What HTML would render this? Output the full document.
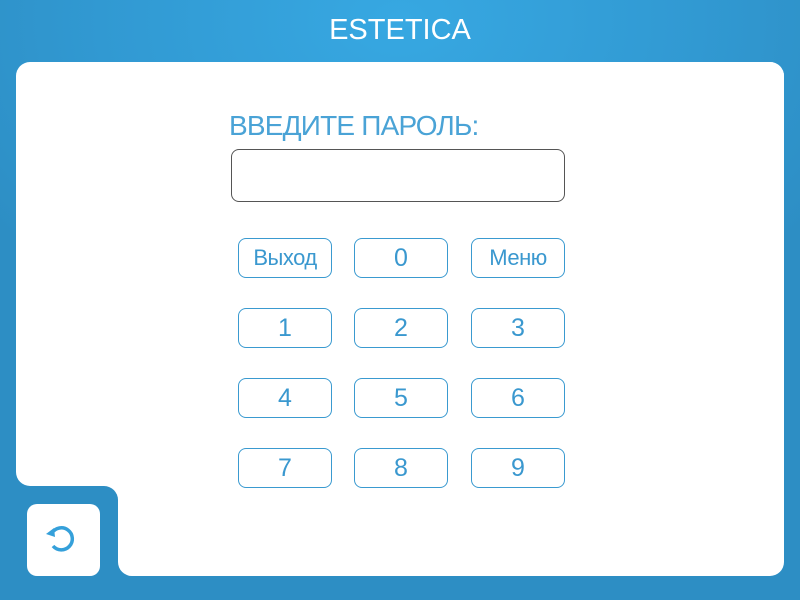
<!DOCTYPE html>
<html><head><meta charset="utf-8"><style>
*{margin:0;padding:0;box-sizing:border-box}
body{width:800px;height:600px;overflow:hidden;position:relative;font-family:"Liberation Sans","DejaVu Sans",sans-serif;
background:radial-gradient(ellipse 500px 350px at 400px 20px,#37a8e2 0%,#3199d2 60%,#2d8ec4 100%);}
.title{position:absolute;top:14px;left:0;width:800px;text-align:center;color:#fff;font-size:29px;font-weight:300}
.p1{position:absolute;left:16px;top:62px;width:768px;height:424px;background:#fff;border-radius:14px}
.p2{position:absolute;left:118px;top:62px;width:666px;height:514px;background:#fff;border-radius:14px}
.fill{position:absolute;left:100px;top:480px;width:30px;height:30px;background:#fff}
.notch{position:absolute;left:16px;top:486px;width:102px;height:114px;border-top-right-radius:14px;
background:radial-gradient(ellipse 500px 350px at 400px 20px,#37a8e2 0%,#3199d2 60%,#2d8ec4 100%) fixed;}
.reset{position:absolute;left:27px;top:504px;width:73px;height:72px;background:#fff;border-radius:10px}
h1{position:absolute;left:229px;top:110px;font-size:28px;font-weight:normal;color:#4aa3d6;letter-spacing:-0.8px}
.inp{position:absolute;left:231px;top:149px;width:334px;height:53px;border:1px solid #555;border-radius:8px}
.b{position:absolute;width:94px;height:40px;border:1px solid #3a9ad0;border-radius:8px;color:#3a98cf;font-size:25px;text-align:center;line-height:38px}
.w{font-size:22px;letter-spacing:-0.5px}
</style></head><body>
<div class="title">ESTETICA</div>
<div class="p1"></div>
<div class="p2"></div>
<div class="fill"></div>
<div class="notch"></div>
<div class="reset"><svg width="73" height="72" viewBox="0 0 73 72"><path d="M25 29 A11 11 0 1 1 26 42" fill="none" stroke="#35a0da" stroke-width="3.5"/><path d="M19 30 L27 24 L28 33 Z" fill="#35a0da"/></svg></div>
<h1>ВВЕДИТЕ ПАРОЛЬ:</h1>
<div class="inp"></div>
<div class="b w" style="left:238px;top:238px">Выход</div>
<div class="b" style="left:354px;top:238px">0</div>
<div class="b w" style="left:471px;top:238px">Меню</div>
<div class="b" style="left:238px;top:308px">1</div>
<div class="b" style="left:354px;top:308px">2</div>
<div class="b" style="left:471px;top:308px">3</div>
<div class="b" style="left:238px;top:378px">4</div>
<div class="b" style="left:354px;top:378px">5</div>
<div class="b" style="left:471px;top:378px">6</div>
<div class="b" style="left:238px;top:448px">7</div>
<div class="b" style="left:354px;top:448px">8</div>
<div class="b" style="left:471px;top:448px">9</div>
</body></html>
